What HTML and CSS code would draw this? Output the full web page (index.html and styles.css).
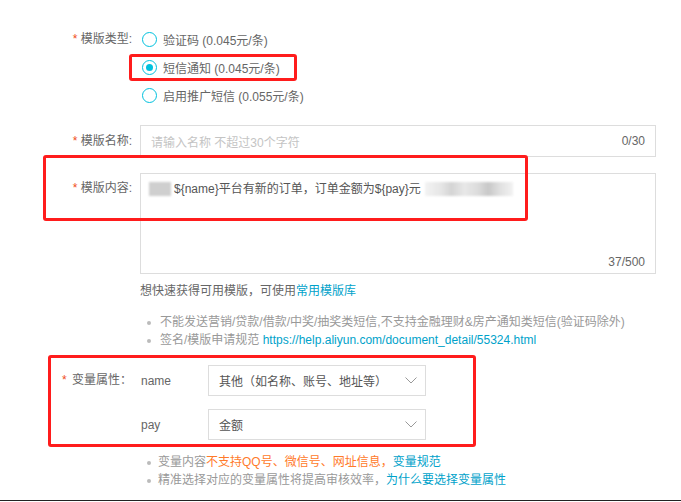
FILE: index.html
```html
<!DOCTYPE html>
<html>

<head>
    <meta charset="utf-8">
    <link rel="stylesheet" href="styles.css">
</head>

<body>
    <div class="page">
        <div class="form-item">
            <div class="label radio-label"><span class="star">*</span> 模版类型:</div>
            <div class="control">
                <div class="radio-row"><span class="radio"></span>验证码 (0.045元/条)</div>
                <div class="radio-row"><span class="radio checked"></span>短信通知 (0.045元/条)</div>
                <div class="radio-row"><span class="radio"></span>启用推广短信 (0.055元/条)</div>
            </div>
        </div>

        <div class="form-item gap">
            <div class="label input-label"><span class="star">*</span> 模版名称:</div>
            <div class="control">
                <div class="input">
                    <span class="placeholder">请输入名称 不超过30个字符</span>
                    <span class="count">0/30</span>
                </div>
            </div>
        </div>

        <div class="form-item gap">
            <div class="label area-label"><span class="star">*</span> 模版内容:</div>
            <div class="control">
                <div class="textarea">
                    <div class="area-text"><span class="blur blur-a"></span>${name}平台有新的订单，订单金额为${pay}元<span class="blur blur-b"></span></div>
                    <span class="count">37/500</span>
                </div>
                <div class="hint">想快速获得可用模版，可使用<a class="link">常用模版库</a></div>
                <ul class="notes">
                    <li>不能发送营销/贷款/借款/中奖/抽奖类短信,不支持金融理财&amp;房产通知类短信(验证码除外)</li>
                    <li>签名/模版申请规范 <a class="link">https://help.aliyun.com/document_detail/55324.html</a></li>
                </ul>
            </div>
        </div>

        <div class="form-item gap">
            <div class="label var-label"><span class="star">*</span> 变量属性：</div>
            <div class="control">
                <div class="var-row">
                    <span class="var-name">name</span>
                    <div class="select">其他（如名称、账号、地址等）<svg class="chevron" width="12" height="7" viewBox="0 0 12 7"><path d="M0.5 0.5 L6 6 L11.5 0.5" fill="none" stroke="#999" stroke-width="1"/></svg></div>
                </div>
                <div class="var-row">
                    <span class="var-name">pay</span>
                    <div class="select">金额<svg class="chevron" width="12" height="7" viewBox="0 0 12 7"><path d="M0.5 0.5 L6 6 L11.5 0.5" fill="none" stroke="#999" stroke-width="1"/></svg></div>
                </div>
                <ul class="notes var-notes">
                    <li>变量内容<span class="warn">不支持QQ号、微信号、网址信息，</span><a class="link">变量规范</a></li>
                    <li>精准选择对应的变量属性将提高审核效率，<a class="link">为什么要选择变量属性</a></li>
                </ul>
            </div>
        </div>

        <div class="mark mark-type"></div>
        <div class="mark mark-content"></div>
        <div class="mark mark-vars"></div>
    </div>
</body>

</html>
```

FILE: styles.css
```css
body {
    margin: 0;
    background-color: #fff;
    font-family: "Liberation Sans", "Noto Sans CJK SC", sans-serif;
    font-size: 12px;
    color: #666;
}

.page {
    position: relative;
    height: 501px;
    padding-top: 25px;
    box-sizing: border-box;
    border-bottom: 1px solid #222;
}

.form-item {
    display: flex;
    align-items: flex-start;
}

.form-item.gap {
    margin-top: 16px;
}

.label {
    width: 132px;
    margin-right: 8px;
    text-align: right;
    white-space: nowrap;
    color: #666;
    flex-shrink: 0;
}

.star {
    color: #f04d21;
}

.radio-label {
    line-height: 28px;
}

.input-label {
    line-height: 32px;
}

.area-label {
    padding-top: 6px;
    line-height: 18px;
}

.var-label {
    line-height: 31px;
}

.var-label .star {
    margin-right: 2px;
}

.control {
    flex: 1;
}

.radio-row {
    display: flex;
    align-items: center;
    height: 28px;
    color: #666;
}

.radio {
    width: 13px;
    height: 13px;
    margin-left: 2px;
    margin-right: 6px;
    border: 1px solid #00c1de;
    border-radius: 50%;
    position: relative;
}

.radio.checked::after {
    content: "";
    position: absolute;
    left: 3px;
    top: 3px;
    width: 7px;
    height: 7px;
    border-radius: 50%;
    background-color: #00c1de;
}

.input {
    width: 516px;
    height: 32px;
    border: 1px solid #ddd;
    box-sizing: border-box;
    display: flex;
    align-items: center;
    justify-content: space-between;
    padding: 0 10px;
}

.placeholder {
    color: #c4c4c4;
}

.count {
    color: #666;
}

.textarea {
    width: 516px;
    height: 101px;
    border: 1px solid #ddd;
    box-sizing: border-box;
    display: flex;
    flex-direction: column;
    justify-content: space-between;
    padding: 6px 10px 2px 8px;
}

.textarea .count {
    align-self: flex-end;
    line-height: 18px;
}

.area-text {
    line-height: 18px;
    color: #555;
    display: flex;
    align-items: center;
}

.blur {
    display: inline-block;
    height: 14px;
    filter: blur(1px);
}

.blur-a {
    width: 22px;
    margin-right: 3px;
    background-color: #cfcfcf;
}

.blur-b {
    width: 88px;
    margin-left: 4px;
    background: linear-gradient(90deg, #f3f3f3 0, #e6e6e6 18%, #d4d4d4 30%, #e8e8e8 45%, #dcdcdc 60%, #c8c8c8 72%, #e0e0e0 85%, #f2f2f2 100%);
}

.hint {
    margin-top: 8px;
    line-height: 18px;
    color: #666;
}

.link {
    color: #00a2ca;
    text-decoration: none;
}

.warn {
    color: #ff7a2a;
}

.notes {
    list-style: none;
    margin: 13px 0 0;
    padding: 0;
}

.notes li {
    position: relative;
    line-height: 18px;
    padding-left: 20px;
    color: #999;
}

.notes li::before {
    content: "";
    position: absolute;
    left: 7px;
    top: 8px;
    width: 4px;
    height: 4px;
    border-radius: 50%;
    background-color: #bbb;
}

.var-notes li {
    padding-left: 18px;
}

.var-row {
    display: flex;
    align-items: center;
    height: 31px;
}

.var-row + .var-row {
    margin-top: 13px;
}

.var-name {
    width: 67px;
    padding-left: 1px;
    color: #666;
}

.select {
    width: 218px;
    height: 31px;
    border: 1px solid #ddd;
    box-sizing: border-box;
    display: flex;
    align-items: center;
    justify-content: space-between;
    padding: 0 8px 0 10px;
    color: #555;
}

.var-notes {
    margin-top: 13px;
}

.mark {
    position: absolute;
    border: 3px solid #ff1c1c;
    border-radius: 3px;
    box-sizing: border-box;
}

.mark-type {
    left: 129px;
    top: 54px;
    width: 168px;
    height: 27px;
}

.mark-content {
    left: 43px;
    top: 155px;
    width: 485px;
    height: 66px;
}

.mark-vars {
    left: 48px;
    top: 355px;
    width: 428px;
    height: 92px;
}
```
